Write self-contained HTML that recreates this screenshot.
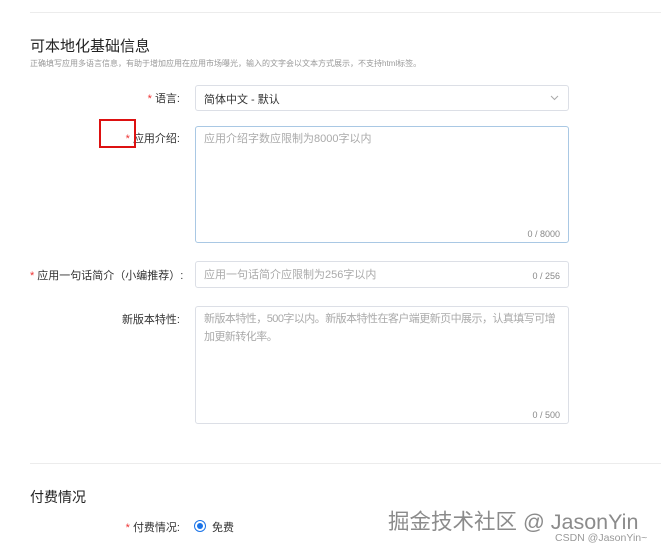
<!DOCTYPE html>
<html><head><meta charset="utf-8"><style>
body{margin:0;width:661px;height:551px;background:#fff;font-family:"Liberation Sans","Noto Sans CJK SC",sans-serif;position:relative;overflow:hidden;color:#333}
.a{position:absolute;white-space:nowrap}
.hr{position:absolute;left:30px;right:0;height:1px;background:#ececec}
.lab{position:absolute;font-size:11px;color:#333;text-align:right;white-space:nowrap}
.lab i{color:#e33;font-style:normal;margin-right:3px}
.box{position:absolute;left:195px;width:374px;border:1px solid #dcdfe6;border-radius:3px;box-sizing:border-box}
.ph{position:absolute;left:8px;top:3px;font-size:11px;color:#aaa;line-height:18px}
.cnt{position:absolute;right:8px;bottom:3px;font-size:9px;color:#888}
</style></head><body>
<div class="hr" style="top:12px"></div>
<div class="a" style="left:30px;top:35px;font-size:15px;color:#222">可本地化基础信息</div>
<div class="a" style="left:30px;top:58px;font-size:8px;color:#999">正确填写应用多语言信息，有助于增加应用在应用市场曝光，输入的文字会以文本方式展示，不支持html标签。</div>
<div class="lab" style="right:481px;top:90px"><i>*</i>语言:</div>
<div class="box" style="top:85px;height:26px"><div class="a" style="left:8px;top:5px;font-size:11px;color:#333">简体中文 - 默认</div>
<svg class="a" style="right:9px;top:9px" width="9" height="6" viewBox="0 0 9 6"><path d="M1 1L4.5 4.5L8 1" fill="none" stroke="#aaa" stroke-width="1"/></svg></div>
<div class="lab" style="right:481px;top:130px"><i>*</i>应用介绍:</div>
<div class="a" style="left:99px;top:119px;width:33px;height:25px;border:2px solid #d11"></div>
<div class="box" style="top:126px;height:117px;border-color:#a9c8e4"><div class="ph">应用介绍字数应限制为8000字以内</div><div class="cnt">0 / 8000</div></div>
<div class="lab" style="left:30px;top:267px"><i>*</i>应用一句话简介（小编推荐）:</div>
<div class="box" style="top:261px;height:27px"><div class="ph" style="top:4px">应用一句话简介应限制为256字以内</div><div class="cnt" style="bottom:6px">0 / 256</div></div>
<div class="lab" style="right:481px;top:311px">新版本特性:</div>
<div class="box" style="top:306px;height:118px"><div class="ph" style="white-space:nowrap;letter-spacing:-0.55px">新版本特性，500字以内。新版本特性在客户端更新页中展示，认真填写可增<br>加更新转化率。</div><div class="cnt">0 / 500</div></div>
<div class="hr" style="top:463px"></div>
<div class="a" style="left:30px;top:487px;font-size:14px;color:#222">付费情况</div>
<div class="lab" style="right:481px;top:519px"><i>*</i>付费情况:</div>
<div class="a" style="left:194px;top:520px;width:10px;height:10px;border:1px solid #1a73e8;border-radius:50%"><div style="position:absolute;left:2px;top:2px;width:6px;height:6px;border-radius:50%;background:#1a73e8"></div></div>
<div class="a" style="left:212px;top:519px;font-size:11px">免费</div>
<div class="a" style="left:388px;top:505px;font-size:21.5px;color:#777;opacity:.85">掘金技术社区 @ JasonYin</div>
<div class="a" style="left:555px;top:532px;font-size:10.5px;color:#999">CSDN @JasonYin~</div>
</body></html>
